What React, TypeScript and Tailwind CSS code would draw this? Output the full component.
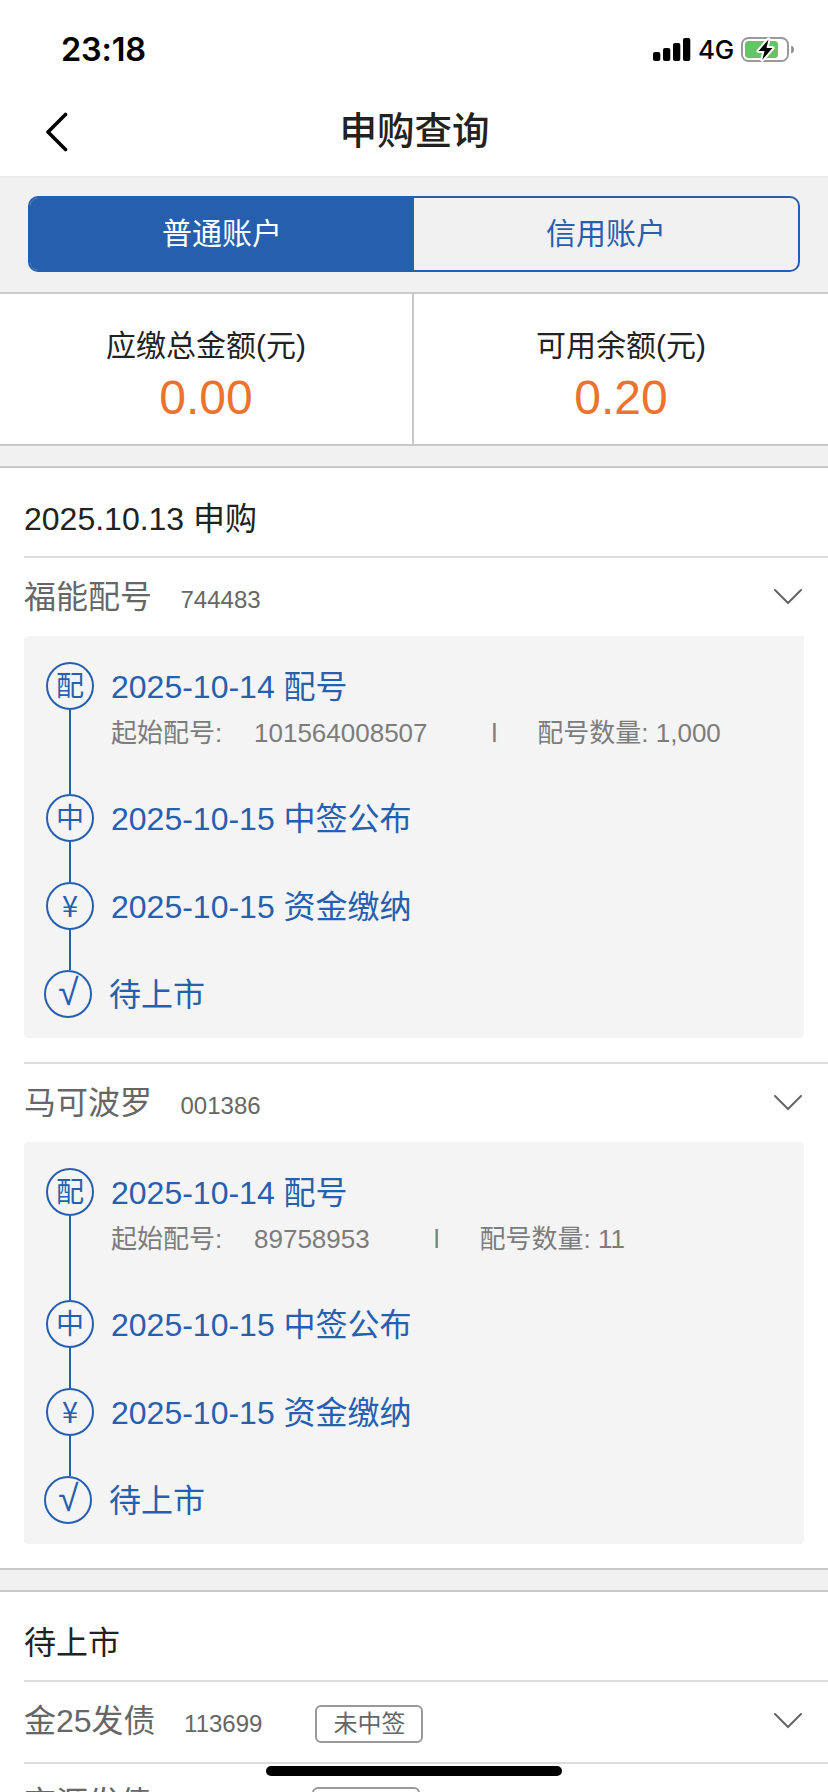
import { clsx } from 'clsx';

type Step = {
  mark: string;
  title: string;
  start?: string;
  count?: string;
};

type Stock = {
  name: string;
  code: string;
  steps: Step[];
};

const stocks: Stock[] = [
  {
    name: '福能配号',
    code: '744483',
    steps: [
      { mark: '配', title: '2025-10-14 配号', start: '101564008507', count: '1,000' },
      { mark: '中', title: '2025-10-15 中签公布' },
      { mark: '¥', title: '2025-10-15 资金缴纳' },
      { mark: '√', title: '待上市' },
    ],
  },
  {
    name: '马可波罗',
    code: '001386',
    steps: [
      { mark: '配', title: '2025-10-14 配号', start: '89758953', count: '11' },
      { mark: '中', title: '2025-10-15 中签公布' },
      { mark: '¥', title: '2025-10-15 资金缴纳' },
      { mark: '√', title: '待上市' },
    ],
  },
];

const pending = [
  { name: '金25发债', code: '113699', status: '未中签' },
  { name: '京源发债', code: '118016', status: '未中签' },
];

// the yen and check glyphs are drawn smaller by the font than the Chinese ones
const markStyles: Record<string, string> = {
  '¥': "font-['Noto_Sans_CJK_SC',sans-serif] text-[29px] pb-[4px]",
  '√': 'text-[37px] pb-[4px] pl-px',
};

function StatusBar() {
  return (
    <div className="flex h-[88px] shrink-0 items-start justify-between pl-[61px] pr-[33px] pt-[28px] font-['Inter',sans-serif] text-black">
      <span className="text-[32.5px] font-semibold leading-[44px] tracking-[-0.2px]">23:18</span>
      <div className="flex h-[44px] items-center">
        <svg width="38" height="24" viewBox="0 0 38 24">
          <rect x="0" y="14" width="7.3" height="9" rx="2" />
          <rect x="10" y="10" width="7.3" height="13" rx="2" />
          <rect x="20" y="5" width="7.3" height="18" rx="2" />
          <rect x="30" y="0" width="7.3" height="23" rx="2" />
        </svg>
        <span className="ml-[7px] w-[36px] text-[26px] font-medium leading-[44px] tracking-[-0.3px]">4G</span>
        <svg className="ml-[7px]" width="54" height="26" viewBox="0 0 54 26" fill="none">
          <rect x="1" y="1" width="46" height="23" rx="6.5" stroke="#9a9a9a" strokeWidth="2" />
          <path d="M50.200 8.500c3.700 1.200 3.700 7 0 8.200z" fill="#8d8d8d" />
          <rect x="4" y="4" width="33" height="17" rx="3.500" fill="#65c466" />
          <path
            d="M27.500 2.500 17.500 14h6L21.300 22.800 31.500 11h-6z"
            fill="#000"
            stroke="#fff"
            strokeWidth="4"
            strokeLinejoin="round"
            paintOrder="stroke"
          />
        </svg>
      </div>
    </div>
  );
}

function Chevron() {
  return (
    <svg className="mr-[26px] mt-[30px]" width="28" height="17" viewBox="0 0 28 17" fill="none">
      <path d="M1 2 14 15 27 2" stroke="#666" strokeWidth="2" strokeLinecap="round" />
    </svg>
  );
}

function RowHead({ name, code, status }: { name: string; code: string; status?: string }) {
  return (
    <div className="flex h-[78px] items-start justify-between">
      <div className="flex items-baseline text-[#666]">
        <span className="text-[32px] leading-[78px]">{name}</span>
        <span className="ml-[28.5px] text-[24px]">{code}</span>
        {status && (
          <span className="ml-[53px] flex h-[38px] items-center rounded-md border-2 border-[#999] px-4 text-[24px] leading-none">
            {status}
          </span>
        )}
      </div>
      <Chevron />
    </div>
  );
}

function Timeline({ steps }: { steps: Step[] }) {
  return (
    <div className="mr-6 rounded-[4px] bg-[#f4f4f4] pb-5 pt-[26px] text-[#275faf]">
      {steps.map((step, i) => {
        const last = i === steps.length - 1;
        return (
          <div key={step.mark} className={clsx('flex', last ? 'h-12 pl-5' : 'pl-[22px]')}>
            <div className="flex flex-col items-center">
              <div
                className={clsx(
                  'flex size-12 shrink-0 items-center justify-center rounded-full border-2 border-[#275faf] leading-none',
                  markStyles[step.mark] ?? 'pt-px text-[28px]',
                )}
              >
                {step.mark}
              </div>
              {!last && <div className={clsx('w-0.5 bg-[#275faf]', step.start ? 'h-[84px]' : 'h-[40px]')} />}
            </div>
            <div className="ml-[17px] pt-px">
              <p className="text-[32px] leading-[48px]">{step.title}</p>
              {step.start && (
                <div className="flex text-[26px] leading-[44px] text-[#7c7c7c]">
                  <span className="w-[143px]">起始配号:</span>
                  <span>{step.start}</span>
                  <span className="ml-[64px]">l</span>
                  <span className="ml-[40px]">配号数量: {step.count}</span>
                </div>
              )}
            </div>
          </div>
        );
      })}
    </div>
  );
}

export default function App() {
  return (
    <div className="relative flex h-[1792px] w-[828px] flex-col overflow-hidden bg-white font-['Liberation_Sans','Noto_Sans_CJK_SC',sans-serif] text-[#222]">
      <StatusBar />

      {/* Nav bar */}
      <div className="grid h-[90px] shrink-0 grid-cols-[120px_1fr_120px] items-center border-b-2 border-[#ebebeb]">
        <svg className="mb-px ml-[45px]" width="24" height="40" viewBox="0 0 24 40" fill="none">
          <path d="M20.500 2.500 3 20 20.500 37.500" stroke="#000" strokeWidth="3.600" strokeLinecap="round" strokeLinejoin="round" />
        </svg>
        <h1 className="pb-px pl-px text-center text-[37.5px] font-medium">申购查询</h1>
      </div>

      {/* Account tabs */}
      <div className="h-[116px] shrink-0 border-b-2 border-[#c9c9c9] bg-[#f1f1f1] px-7 pt-[18px]">
        <div className="grid h-[76px] grid-cols-2 overflow-hidden rounded-[10px] border-2 border-[#275faf] text-[30px]">
          <button className="bg-[#275faf] pb-0.5 text-white">普通账户</button>
          <button className="pb-0.5 text-[#275faf]">信用账户</button>
        </div>
      </div>

      {/* Amounts */}
      <div className="grid h-[152px] shrink-0 grid-cols-2 border-b-2 border-[#c9c9c9] text-center">
        <div className="border-r-2 border-[#c9c9c9] pt-[30px]">
          <p className="text-[30px] leading-[44px]">应缴总金额(元)</p>
          <p className="text-[48px] leading-[60px] text-[#ea732d]">0.00</p>
        </div>
        <div className="pt-[30px]">
          <p className="text-[30px] leading-[44px]">可用余额(元)</p>
          <p className="text-[48px] leading-[60px] text-[#ea732d]">0.20</p>
        </div>
      </div>
      <div className="h-[22px] shrink-0 border-b-2 border-[#c9c9c9] bg-[#f1f1f1]" />

      {/* Subscriptions by date */}
      <section className="shrink-0 pl-6">
        <h2 className="h-[88px] pt-[3px] text-[32px] leading-[96px]">2025.10.13 申购</h2>
        {stocks.map((stock) => (
          <div key={stock.code} className="border-t-2 border-[#dcdcdc] pb-6">
            <RowHead name={stock.name} code={stock.code} />
            <Timeline steps={stock.steps} />
          </div>
        ))}
      </section>
      <div className="h-[24px] shrink-0 border-y-2 border-[#c9c9c9] bg-[#f1f1f1]" />

      {/* Waiting to be listed */}
      <section className="shrink-0 pl-6">
        <h2 className="h-[88px] pt-[3px] text-[32px] leading-[96px]">待上市</h2>
        {pending.map((item) => (
          <div key={item.code} className="h-[82px] border-t-2 border-[#dcdcdc]">
            <RowHead {...item} />
          </div>
        ))}
      </section>

      {/* Home indicator */}
      <div className="absolute bottom-4 left-[266px] h-[10px] w-[296px] rounded-full bg-black" />
    </div>
  );
}
